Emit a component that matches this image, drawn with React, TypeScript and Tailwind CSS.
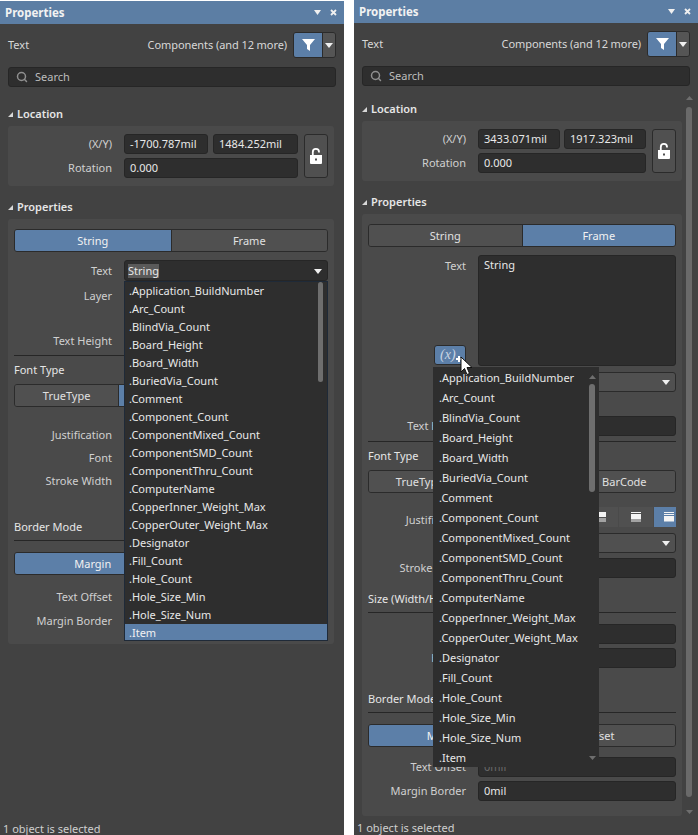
import type { ReactNode } from 'react';
import { Search } from 'lucide-react';

const listItems = [
  '.Application_BuildNumber',
  '.Arc_Count',
  '.BlindVia_Count',
  '.Board_Height',
  '.Board_Width',
  '.BuriedVia_Count',
  '.Comment',
  '.Component_Count',
  '.ComponentMixed_Count',
  '.ComponentSMD_Count',
  '.ComponentThru_Count',
  '.ComputerName',
  '.CopperInner_Weight_Max',
  '.CopperOuter_Weight_Max',
  '.Designator',
  '.Fill_Count',
  '.Hole_Count',
  '.Hole_Size_Min',
  '.Hole_Size_Num',
  '.Item',
];

const Caret = ({ className = '' }: { className?: string }) => (
  <svg width="8" height="5" viewBox="0 0 8 5" className={className}>
    <polygon points="0,0 8,0 4,5" fill="#f0f0f0" />
  </svg>
);

const TopBar = () => (
  <>
    <div className="h-[23px] bg-[#5c7ea4] flex items-center justify-between pl-[5px] pr-[7px]">
      <span className="text-[11.5px] font-bold text-[#f2f2f2]">Properties</span>
      <div className="flex items-center gap-[9px]">
        <svg width="7" height="5" viewBox="0 0 7 5">
          <polygon points="0,0 7,0 3.5,5" fill="#f0f0f0" />
        </svg>
        <svg width="7" height="7" viewBox="0 0 7 7">
          <path d="M1 1 L6 6 M6 1 L1 6" stroke="#f0f0f0" strokeWidth="1.8" />
        </svg>
      </div>
    </div>
    <div className="mt-[8px] mx-2 h-[26px] flex items-center">
      <span className="text-[#d8d8d8]">Text</span>
      <span className="ml-auto mr-[6px] text-[#d8d8d8] tracking-[-0.08px]">Components (and 12 more)</span>
      <div className="flex h-[26px] w-[43px] rounded-[3px] border border-[#2b2b2b] overflow-hidden">
        <div className="w-[28px] bg-[#5c7fa8] flex items-center justify-center">
          <svg width="13" height="12" viewBox="0 0 13 12">
            <polygon points="0,0 13,0 8,6 8,12 5,10 5,6" fill="#fff" />
          </svg>
        </div>
        <div className="flex-1 bg-[#555] border-l border-[#2b2b2b] flex items-center justify-center">
          <Caret />
        </div>
      </div>
    </div>
    <div className="mt-[9px] mx-2 w-[328px] h-[20px] bg-[#2e2e2e] border border-[#262626] rounded-[3px] flex items-center pl-[7px] gap-[7px] text-[#bdbdbd]">
      <Search size={12} strokeWidth={3} className="text-[#8f8f8f]" />
      Search
    </div>
  </>
);

const Heading = ({ children, className }: { children: ReactNode; className: string }) => (
  <div className={`h-[16px] ml-2 flex items-center gap-[4px] font-semibold text-[#e6e6e6] ${className}`}>
    <svg width="5" height="5" viewBox="0 0 5 5">
      <polygon points="5,0 5,5 0,5" fill="#d8d8d8" />
    </svg>
    {children}
  </div>
);

const Input = ({ value, className = '' }: { value?: string; className?: string }) => (
  <div className={`h-[20px] bg-[#2e2e2e] border border-[#262626] rounded-[3px] pl-[5px] flex items-center text-[#e8e8e8] ${className}`}>
    {value}
  </div>
);

const Row = ({ label, className = '', children }: { label: string; className?: string; children?: ReactNode }) => (
  <div className={`h-[20px] flex items-center gap-[12px] ${className}`}>
    <span className="w-[98px] shrink-0 text-right text-[#d0d0d0] whitespace-nowrap">{label}</span>
    {children}
  </div>
);

const SubTitle = ({ children, className }: { children: ReactNode; className: string }) => (
  <>
    <div className={`h-[14px] flex items-center text-[#e6e6e6] whitespace-nowrap ${className}`}>{children}</div>
    <div className="mt-[6px] h-px bg-[#262626]" />
  </>
);

const Segments = ({ items, active, className = '' }: { items: string[]; active: number; className?: string }) => (
  <div className={`flex h-[23px] rounded-[3px] border border-[#2b2b2b] overflow-hidden ${className}`}>
    {items.map((item, i) => (
      <div
        key={item}
        className={`flex-1 pt-px flex items-center justify-center border-l first:border-l-0 border-[#2b2b2b] ${
          i === active ? 'bg-[#5c7fa8] text-[#f2f2f2]' : 'bg-[#505050] text-[#e0e0e0]'
        }`}
      >
        {item}
      </div>
    ))}
  </div>
);

const Location = ({ x, y, boxClass, xClass, yClass, gapClass, rotClass }: { x: string; y: string; boxClass: string; xClass: string; yClass: string; gapClass: string; rotClass: string }) => (
  <div className={`mt-[4px] ml-2 h-[60px] bg-[#4a4a4a] rounded-[3px] pt-2 pl-[6px] flex ${boxClass}`}>
    <div className="flex flex-col gap-[4px]">
      <Row label="(X/Y)">
        <div className={`flex ${gapClass}`}>
          <Input value={x} className={xClass} />
          <Input value={y} className={yClass} />
        </div>
      </Row>
      <Row label="Rotation">
        <Input value="0.000" className={rotClass} />
      </Row>
    </div>
    <div className="ml-[6px] w-[24px] h-[44px] bg-[#505050] border border-[#2b2b2b] rounded-[3px] flex items-center justify-center">
      <svg width="12" height="16" viewBox="0 0 12 16">
        <path d="M2.8 7 V4 a3.1 3.1 0 0 1 6.2 0 V4.5" fill="none" stroke="#fff" strokeWidth="1.8" />
        <path d="M0 7 h12 v8 q0 1 -1 1 h-10 q-1 0 -1 -1 z" fill="#fff" />
        <rect x="5" y="10.5" width="2" height="2" fill="#505050" />
      </svg>
    </div>
  </div>
);

const Justify = ({ lines, active }: { lines: string; active?: boolean }) => (
  <div className={`w-[34px] h-[20px] shrink-0 flex items-center justify-center ${active ? 'bg-[#5c7fa8] justify-start pl-[10px]' : 'bg-[#505050]'}`}>
    <svg width="10" height="10" viewBox="0 0 10 10">
      <path d={lines} fill="#f4f4f4" />
    </svg>
  </div>
);

const Status = ({ className }: { className: string }) => (
  <div className={`absolute left-[3px] bottom-0 flex items-center text-[#cfcfcf] whitespace-nowrap ${className}`}>1 object is selected</div>
);

const LeftPanel = () => (
  <div className="relative w-[344px] mt-px h-[834px] bg-[#424242] overflow-hidden">
    <TopBar />
    <Heading className="mt-[19px]">Location</Heading>
    <Location
      x="-1700.787mil"
      y="1484.252mil"
      boxClass="w-[326px]"
      xClass="w-[84px]"
      yClass="w-[85px]"
      gapClass="gap-[5px]"
      rotClass="w-[174px]"
    />
    <Heading className="mt-[13px]">Properties</Heading>
    <div className="mt-[4px] ml-2 w-[326px] h-[425px] bg-[#4a4a4a] rounded-[3px] pt-[10px] px-[6px] text-[#d0d0d0]">
      <Segments items={['String', 'Frame']} active={0} />
      <Row label="Text" className="mt-[8px] h-[21px] pt-px">
        <div className="relative w-[204px] h-[21px] -mt-px bg-[#2e2e2e] border border-[#262626] rounded-[3px] pl-[3px] flex items-center">
          <span className="bg-[#5a5a5a] text-[#e8e8e8] leading-[14px] mt-px">String</span>
          <Caret className="absolute right-[5px] top-[8px]" />
        </div>
      </Row>
      <Row label="Layer" className="mt-[5px]" />
      <Row label="Text Height" className="mt-[25px]" />
      <div className="mt-[4px] h-px bg-[#262626]" />
      <div className="mt-[7px] h-[14px] flex items-center text-[#e6e6e6]">Font Type</div>
      <Segments items={['TrueType', 'Stroke', 'BarCode']} active={1} className="mt-[7px]" />
      <Row label="Justification" className="mt-[18px]" />
      <Row label="Font" className="mt-[3px]" />
      <Row label="Stroke Width" className="mt-[3px]" />
      <SubTitle className="mt-[29px]">Border Mode</SubTitle>
      <Segments items={['Margin', 'Offset']} active={0} className="mt-[11px] h-[22px]" />
      <Row label="Text Offset" className="mt-[12px]" />
      <Row label="Margin Border" className="mt-[4px]" />
    </div>
    {/* dropdown opened under the Text field */}
    <div className="absolute left-[124px] top-[280px] w-[204px] h-[360px] bg-[#2e2e2e] border border-[#1f2a38] overflow-hidden text-[#e8e8e8]">
      {listItems.map((item, i) => (
        <div
          key={item}
          className={`h-[18px] pl-[4px] flex items-center ${i === 19 ? 'bg-[#5c7fa8] text-[#f2f2f2]' : ''}`}
        >
          {item}
        </div>
      ))}
      <div className="absolute left-[193px] top-0 w-[5px] h-[100px] rounded-full bg-[#6e6e6e]" />
    </div>
    <Status className="h-[11px]" />
  </div>
);

const RightPanel = () => (
  <div className="relative w-[344px] h-[835px] bg-[#424242] overflow-hidden">
    <TopBar />
    <Heading className="mt-[15px]">Location</Heading>
    <Location
      x="3433.071mil"
      y="1917.323mil"
      boxClass="w-[320px]"
      xClass="w-[82px]"
      yClass="w-[82px]"
      gapClass="gap-[4px]"
      rotClass="w-[168px]"
    />
    <Heading className="mt-[13px]">Properties</Heading>
    <div className="mt-[4px] ml-2 w-[320px] h-[602px] bg-[#4a4a4a] rounded-[3px] pt-[10px] px-[6px] text-[#d0d0d0]">
      <Segments items={['String', 'Frame']} active={1} />
      <div className="mt-[8px] h-[111px] flex gap-[12px]">
        <div className="w-[98px] shrink-0 flex flex-col items-end">
          <span className="mt-[3px] text-[#d0d0d0]">Text</span>
          <div className="mt-auto mb-px w-[32px] h-[20px] bg-[#5c7fa8] border border-[#2b2b2b] rounded-[3px] flex items-center pl-[5px] relative">
            <span className="font-['Liberation_Serif',serif] italic text-[#c8d4e2] text-[14px] leading-none">(x)</span>
            <svg width="8" height="8" viewBox="0 0 8 8" className="absolute left-[20px] top-[9px]">
              <path d="M4 1 V7 M1 4 H7" stroke="#fff" strokeWidth="2" />
            </svg>
          </div>
        </div>
        <div className="w-[198px] bg-[#2e2e2e] border border-[#262626] rounded-[3px] pl-[5px] pt-px text-[#e8e8e8]">String</div>
      </div>
      <Row label="Layer" className="mt-[6px]">
        <div className="relative w-[198px] h-[20px] bg-[#505050] border border-[#2b2b2b] rounded-[3px]">
          <Caret className="absolute right-[5px] top-[7px]" />
        </div>
      </Row>
      <Row label="Text Height" className="mt-[24px]">
        <Input className="w-[198px]" />
      </Row>
      <div className="mt-[5px] h-px bg-[#262626]" />
      <div className="mt-[7px] h-[14px] flex items-center text-[#e6e6e6]">Font Type</div>
      <Segments items={['TrueType', 'Stroke', 'BarCode']} active={1} className="mt-[7px]" />
      <Row label="Justification" className="mt-[14px] h-[26px]">
        <div className="w-[198px] h-[20px] self-start flex gap-px pl-px overflow-hidden">
          <Justify lines="M0 0 h10 v5 h-10 z M0 6.5 h10 v1 h-10 z M0 8.5 h10 v1 h-10 z" />
          <Justify lines="M0 0 h10 v5 h-10 z M0 6.5 h10 v1 h-10 z M0 8.5 h10 v1 h-10 z" />
          <Justify lines="M0 0 h10 v5 h-10 z M0 6.5 h10 v1 h-10 z M0 8.5 h10 v1 h-10 z" />
          <Justify lines="M0 0 h10 v5 h-10 z M0 6.5 h10 v1 h-10 z M0 8.5 h10 v1 h-10 z" />
          <Justify lines="M0 0 h10 v1 h-10 z M0 2 h10 v5.5 h-10 z M0 8.5 h10 v1 h-10 z" />
          <Justify lines="M0 0 h10 v1 h-10 z M0 2 h10 v1 h-10 z M0 4 h10 v5.5 h-10 z" active />
        </div>
      </Row>
      <Row label="Font">
        <div className="relative w-[198px] h-[20px] bg-[#505050] border border-[#2b2b2b] rounded-[3px]">
          <Caret className="absolute right-[5px] top-[7px]" />
        </div>
      </Row>
      <Row label="Stroke Width" className="mt-[5px]">
        <Input className="w-[198px]" />
      </Row>
      <SubTitle className="mt-[14px]">Size (Width/Height)</SubTitle>
      <Row label="Width" className="mt-[11px]">
        <Input className="w-[198px]" />
      </Row>
      <Row label="Height" className="mt-[4px]">
        <Input className="w-[198px]" />
      </Row>
      <SubTitle className="mt-[24px]">Border Mode</SubTitle>
      <Segments items={['Margin', 'Offset']} active={0} className="mt-[11px]" />
      <Row label="Text Offset" className="mt-[10px]">
        <Input value="0mil" className="w-[198px] !text-[#6a6a6a]" />
      </Row>
      <Row label="Margin Border" className="mt-[4px]">
        <Input value="0mil" className="w-[198px]" />
      </Row>
    </div>
    {/* panel scrollbar */}
    <svg width="7" height="4" viewBox="0 0 7 4" className="absolute left-[332px] top-[96px]">
      <polygon points="0,4 7,4 3.5,0" fill="#6e6e6e" />
    </svg>
    <div className="absolute left-[332px] top-[107px] w-[6px] h-[690px] rounded-full bg-[#6a6a6a]" />
    <svg width="7" height="4" viewBox="0 0 7 4" className="absolute left-[332px] top-[810px]">
      <polygon points="0,0 7,0 3.5,4" fill="#6e6e6e" />
    </svg>
    {/* dropdown opened by the (x) button */}
    <div className="absolute left-[79px] top-[367px] w-[166px] h-[400px] pt-px bg-[#2e2e2e] overflow-hidden text-[#e8e8e8]">
      {listItems.map(item => (
        <div key={item} className="h-[20px] pl-[6px] flex items-center">
          {item}
        </div>
      ))}
      <svg width="7" height="4" viewBox="0 0 7 4" className="absolute left-[156px] top-[8px]">
        <polygon points="0,4 7,4 3.5,0" fill="#6e6e6e" />
      </svg>
      <div className="absolute left-[156px] top-[17px] w-[6px] h-[108px] rounded-full bg-[#6e6e6e]" />
      <svg width="7" height="4" viewBox="0 0 7 4" className="absolute left-[156px] top-[389px]">
        <polygon points="0,0 7,0 3.5,4" fill="#6e6e6e" />
      </svg>
    </div>
    {/* mouse pointer */}
    <svg width="13" height="20" viewBox="0 0 13 20" className="absolute left-[106px] top-[356px]">
      <path d="M1 1 V16 L4.5 12.5 L7 18.5 L9.5 17.5 L7 11.5 H12 Z" fill="#fff" stroke="#111" strokeWidth="1" />
    </svg>
    <Status className="h-[13px]" />
  </div>
);

export default function App() {
  return (
    <div className="w-[698px] h-[835px] bg-white flex gap-[10px] overflow-hidden font-['Noto_Sans',sans-serif] text-[11px]">
      <LeftPanel />
      <RightPanel />
    </div>
  );
}
